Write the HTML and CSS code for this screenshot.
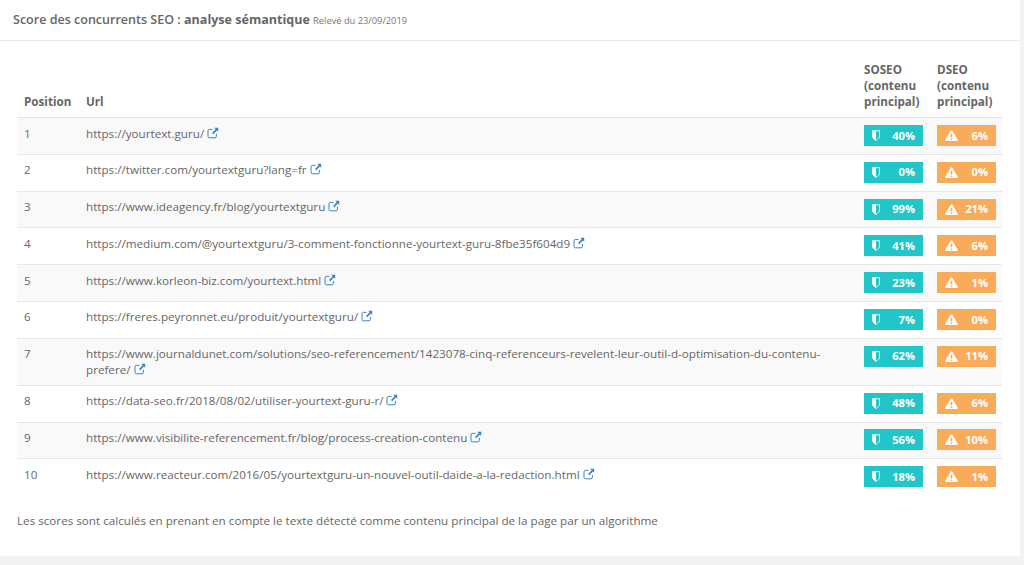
FILE: index.html
```html
<!DOCTYPE html>
<html lang="fr">
<head>
<meta charset="utf-8">
<title>Score des concurrents SEO</title>
<link rel="stylesheet" href="styles.css">
</head>
<body>
<svg class="defs" width="0" height="0" aria-hidden="true">
  <symbol id="ext" viewBox="0 0 12 12">
    <path d="M9.4 7v2.4a1.4 1.4 0 0 1-1.4 1.4H2.4A1.4 1.4 0 0 1 1 9.400V3.800a1.400 1.400 0 0 1 1.400-1.400h3" fill="none" stroke="currentColor" stroke-width="1"/>
    <path d="M7.200.8h4v4L9.900 3.500 6.200 7.200 5 6l3.700-3.700z" fill="currentColor"/>
  </symbol>
  <symbol id="shield" viewBox="0 0 10 12" preserveAspectRatio="none">
    <path d="M.5.800h9v5.600c0 2.400-2.400 4-4.500 5-2.100-1-4.500-2.600-4.500-5z" fill="none" stroke="currentColor"/>
    <path d="M.5.800H5v10.600c-2.100-1-4.500-2.600-4.500-5z" fill="currentColor"/>
  </symbol>
  <symbol id="warn" viewBox="0 0 14 12">
    <path fill-rule="evenodd" d="M7 .2c.4 0 .7.200.9.500l5.900 10c.3.600-.1 1.300-.9 1.300H1.100c-.8 0-1.200-.7-.9-1.300l5.900-10c.2-.3.500-.5.900-.5zM6 4l.2 4.300h1.600L8 4zm0 5.300V11h2V9.300z" fill="currentColor"/>
  </symbol>
</svg>
<main class="panel">
  <header class="panel-head">
    <h1 class="title">Score des concurrents SEO : <b>analyse sémantique</b> <small class="date">Relevé du 23/09/2019</small></h1>
  </header>
  <div class="panel-body">
    <table class="scores">
      <colgroup>
        <col class="c-pos"><col class="c-url"><col class="c-score"><col class="c-score2">
      </colgroup>
      <thead>
        <tr><th>Position</th><th>Url</th><th>SOSEO (contenu principal)</th><th>DSEO (contenu principal)</th></tr>
      </thead>
      <tbody>
        <tr><td>1</td><td>https://yourtext.guru/ <svg class="ext"><use href="#ext"/></svg></td><td><span class="badge teal"><svg class="i-shield"><use href="#shield"/></svg>40%</span></td><td><span class="badge orange"><svg class="i-warn"><use href="#warn"/></svg>6%</span></td></tr>
        <tr><td>2</td><td>https://twitter.com/yourtextguru?lang=fr <svg class="ext"><use href="#ext"/></svg></td><td><span class="badge teal"><svg class="i-shield"><use href="#shield"/></svg>0%</span></td><td><span class="badge orange"><svg class="i-warn"><use href="#warn"/></svg>0%</span></td></tr>
        <tr><td>3</td><td>https://www.ideagency.fr/blog/yourtextguru <svg class="ext"><use href="#ext"/></svg></td><td><span class="badge teal"><svg class="i-shield"><use href="#shield"/></svg>99%</span></td><td><span class="badge orange"><svg class="i-warn"><use href="#warn"/></svg>21%</span></td></tr>
        <tr><td>4</td><td>https://medium.com/@yourtextguru/3-comment-fonctionne-yourtext-guru-8fbe35f604d9 <svg class="ext"><use href="#ext"/></svg></td><td><span class="badge teal"><svg class="i-shield"><use href="#shield"/></svg>41%</span></td><td><span class="badge orange"><svg class="i-warn"><use href="#warn"/></svg>6%</span></td></tr>
        <tr><td>5</td><td>https://www.korleon-biz.com/yourtext.html <svg class="ext"><use href="#ext"/></svg></td><td><span class="badge teal"><svg class="i-shield"><use href="#shield"/></svg>23%</span></td><td><span class="badge orange"><svg class="i-warn"><use href="#warn"/></svg>1%</span></td></tr>
        <tr><td>6</td><td>https://freres.peyronnet.eu/produit/yourtextguru/ <svg class="ext"><use href="#ext"/></svg></td><td><span class="badge teal"><svg class="i-shield"><use href="#shield"/></svg>7%</span></td><td><span class="badge orange"><svg class="i-warn"><use href="#warn"/></svg>0%</span></td></tr>
        <tr><td>7</td><td>https://www.journaldunet.com/solutions/seo-referencement/1423078-cinq-referenceurs-revelent-leur-outil-d-optimisation-du-contenu-prefere/ <svg class="ext"><use href="#ext"/></svg></td><td><span class="badge teal"><svg class="i-shield"><use href="#shield"/></svg>62%</span></td><td><span class="badge orange"><svg class="i-warn"><use href="#warn"/></svg>11%</span></td></tr>
        <tr><td>8</td><td>https://data-seo.fr/2018/08/02/utiliser-yourtext-guru-r/ <svg class="ext"><use href="#ext"/></svg></td><td><span class="badge teal"><svg class="i-shield"><use href="#shield"/></svg>48%</span></td><td><span class="badge orange"><svg class="i-warn"><use href="#warn"/></svg>6%</span></td></tr>
        <tr><td>9</td><td>https://www.visibilite-referencement.fr/blog/process-creation-contenu <svg class="ext"><use href="#ext"/></svg></td><td><span class="badge teal"><svg class="i-shield"><use href="#shield"/></svg>56%</span></td><td><span class="badge orange"><svg class="i-warn"><use href="#warn"/></svg>10%</span></td></tr>
        <tr><td>10</td><td>https://www.reacteur.com/2016/05/yourtextguru-un-nouvel-outil-daide-a-la-redaction.html <svg class="ext"><use href="#ext"/></svg></td><td><span class="badge teal"><svg class="i-shield"><use href="#shield"/></svg>18%</span></td><td><span class="badge orange"><svg class="i-warn"><use href="#warn"/></svg>1%</span></td></tr>
      </tbody>
    </table>
    <p class="note">Les scores sont calculés en prenant en compte le texte détecté comme contenu principal de la page par un algorithme</p>
  </div>
</main>
</body>
</html>
```
FILE: styles.css
```css
* { box-sizing: border-box; }
html, body { margin: 0; height: 100%; }
body {
  background: #f2f2f2;
  color: #666;
  font-family: "Open Sans", sans-serif;
  font-size: 11.67px;
  overflow: hidden;
}
.defs { position: absolute; }
.panel { background: #fff; height: 556px; width: 1020px; }
.panel-head {
  height: 41px;
  padding: 0 13px 1px;
  border-bottom: 1px solid #e9e9e9;
  display: flex;
  align-items: center;
}
.title { margin: 0; font-size: 12.54px; font-weight: 600; color: #666; }
.title b { font-weight: 700; }
.date { font-size: 9.3px; font-weight: 400; color: #777; margin-left: 0; }
.panel-body { padding: 21px 0 0 17px; }
.scores { width: 985px; border-collapse: separate; border-spacing: 0; table-layout: fixed; }
.c-pos { width: 62px; }
.c-url { width: 785px; }
.c-score { width: 73px; }
.c-score2 { width: 65px; }
th {
  text-align: left;
  vertical-align: bottom;
  font-weight: 700;
  line-height: 16.200px;
  padding: 0 7px 6.500px;
  border-bottom: 1px solid #e3e3e3;
  color: #666;
}
td {
  vertical-align: top;
  line-height: 15.600px;
  padding: 7.400px 7px;
  border-bottom: 1px solid #e8e8e8;
}
th:nth-child(3), th:nth-child(4) { padding-left: 0; padding-right: 7px; }
td:nth-child(3), td:nth-child(4) { padding: 6.900px 7px 7.900px 0; }
tbody tr:nth-child(odd) td { background: #f9f9f9; }
tbody tr:last-child td { border-bottom: 0; }
.ext { width: 12px; height: 12px; color: #3a82c4; vertical-align: -1px; margin-left: 0; }
.badge {
  display: flex;
  align-items: center;
  justify-content: space-between;
  width: 59px;
  height: 21px;
  padding: 0 8px;
  color: #fff;
  font-weight: 700;
  font-size: 11.200px;
}
.teal { background: #23c6c8; }
.orange { background: #f8ac59; }
.i-shield { width: 8px; height: 11px; color: #fff; }
.i-warn { width: 13px; height: 11px; color: #fff; }
.note { margin: 17.500px 0 0; line-height: 16px; }
```
